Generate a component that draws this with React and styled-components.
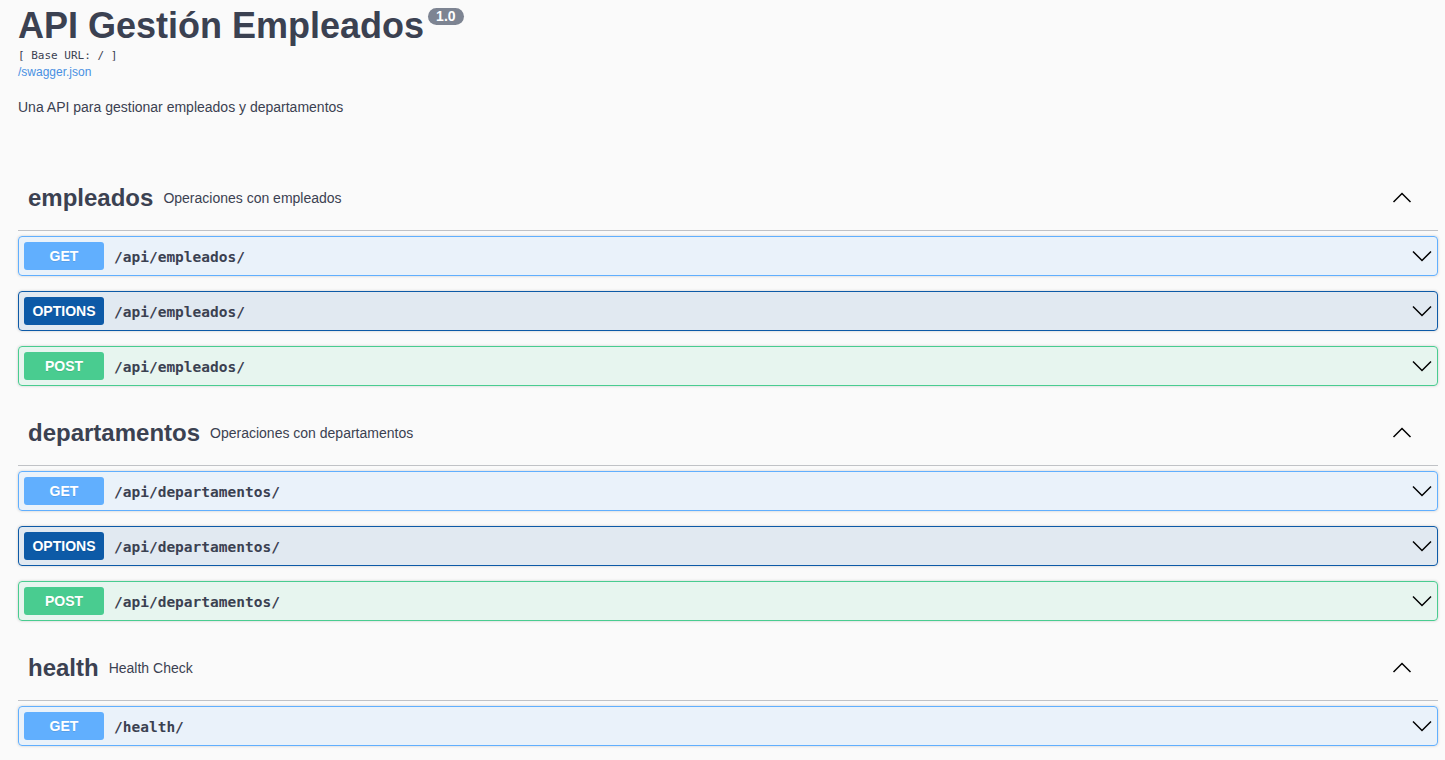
import React from 'react'
import styled, { createGlobalStyle } from 'styled-components'

const GlobalStyle = createGlobalStyle`
  html, body {
    margin: 0;
    padding: 0;
    background: #fafafa;
  }
  body {
    font-family: "Liberation Sans", Arial, sans-serif;
    color: #3b4151;
  }
`

const methodColors = {
  get: { main: '#61affe', bg: 'rgba(97, 175, 254, 0.1)' },
  options: { main: '#0d5aa7', bg: 'rgba(13, 90, 167, 0.1)' },
  post: { main: '#49cc90', bg: 'rgba(73, 204, 144, 0.1)' },
}

const Wrapper = styled.div`
  padding: 0 7px 0 18px;
`

const Info = styled.div`
  margin: 0 0 51px;
`

const Title = styled.h2`
  display: flex;
  align-items: flex-start;
  gap: 4px;
  margin: 5px 0 0;
  font-size: 36px;
  line-height: 41px;
  font-weight: 700;
  color: #3b4151;
`

const Version = styled.span`
  display: inline-block;
  margin-top: 3px;
  height: 17px;
  padding: 0 8px;
  border-radius: 57px;
  background: #7d8492;
  color: #fff;
  font-size: 14px;
  line-height: 17px;
  font-weight: 700;
`

const BaseUrl = styled.pre`
  margin: 2px 0 0;
  font-family: "DejaVu Sans Mono", monospace;
  font-size: 11px;
  line-height: 15px;
  color: #3b4151;
`

const SpecLink = styled.a`
  display: block;
  margin-top: 2px;
  font-size: 12px;
  line-height: 14px;
  color: #4990e2;
  text-decoration: none;
`

const Description = styled.p`
  margin: 20px 0 0;
  font-size: 14px;
  line-height: 16px;
  color: #3b4151;
`

const TagSection = styled.section`
  display: flex;
  flex-direction: column;
`

const TagHeading = styled.h3`
  display: flex;
  align-items: center;
  box-sizing: border-box;
  height: 65px;
  margin: 0 0 5px;
  padding: 0 26px 0 10px;
  border-bottom: 1px solid rgba(59, 65, 81, 0.3);
  font-size: 24px;
  font-weight: 700;
  color: #3b4151;
`

const TagName = styled.span`
  white-space: nowrap;
`

const TagDesc = styled.small`
  flex: 1;
  padding: 0 10px;
  font-size: 14px;
  font-weight: 400;
  color: #3b4151;
`

const Arrow = styled.svg`
  width: 20px;
  height: 20px;
  flex: none;
  fill: none;
  stroke: #000;
  stroke-width: 1.5;
`

const OpBlock = styled.div`
  display: flex;
  align-items: center;
  box-sizing: border-box;
  height: 40px;
  margin: 0 0 15px;
  padding: 0 5px;
  border: 1px solid ${p => methodColors[p.$method].main};
  border-radius: 4px;
  background: ${p => methodColors[p.$method].bg};
  box-shadow: 0 0 3px rgba(0, 0, 0, 0.19);
`

const Method = styled.span`
  flex: none;
  width: 80px;
  height: 28px;
  border-radius: 3px;
  background: ${p => methodColors[p.$method].main};
  color: #fff;
  font-size: 14px;
  font-weight: 700;
  line-height: 28px;
  text-align: center;
  text-shadow: 0 1px 0 rgba(0, 0, 0, 0.1);
`

const Path = styled.span`
  flex: 1;
  padding: 1px 10px 0;
  font-family: "DejaVu Sans Mono", monospace;
  font-size: 14.5px;
  font-weight: 700;
  color: #3b4151;
`

const ChevronDown = () => (
  <Arrow viewBox="0 0 20 20">
    <polyline points="1,5.5 10,14.5 19,5.5" />
  </Arrow>
)

const ChevronUp = () => (
  <Arrow viewBox="0 0 20 20">
    <polyline points="1.5,14 10,5.5 18.5,14" />
  </Arrow>
)

const tags = [
  {
    name: 'empleados',
    description: 'Operaciones con empleados',
    ops: [
      ['get', '/api/empleados/'],
      ['options', '/api/empleados/'],
      ['post', '/api/empleados/'],
    ],
  },
  {
    name: 'departamentos',
    description: 'Operaciones con departamentos',
    ops: [
      ['get', '/api/departamentos/'],
      ['options', '/api/departamentos/'],
      ['post', '/api/departamentos/'],
    ],
  },
  {
    name: 'health',
    description: 'Health Check',
    ops: [['get', '/health/']],
  },
]

const App = () => (
  <>
    <GlobalStyle />
    <Wrapper>
      <Info>
        <Title>
          API Gestión Empleados
          <Version>1.0</Version>
        </Title>
        <BaseUrl>[ Base URL: / ]</BaseUrl>
        <SpecLink href="#">/swagger.json</SpecLink>
        <Description>Una API para gestionar empleados y departamentos</Description>
      </Info>
      {tags.map(tag => (
        <TagSection key={tag.name}>
          <TagHeading>
            <TagName>{tag.name}</TagName>
            <TagDesc>{tag.description}</TagDesc>
            <ChevronUp />
          </TagHeading>
          {tag.ops.map(([method, path]) => (
            <OpBlock key={method + path} $method={method}>
              <Method $method={method}>{method.toUpperCase()}</Method>
              <Path>{path}</Path>
              <ChevronDown />
            </OpBlock>
          ))}
        </TagSection>
      ))}
    </Wrapper>
  </>
)

export default App
